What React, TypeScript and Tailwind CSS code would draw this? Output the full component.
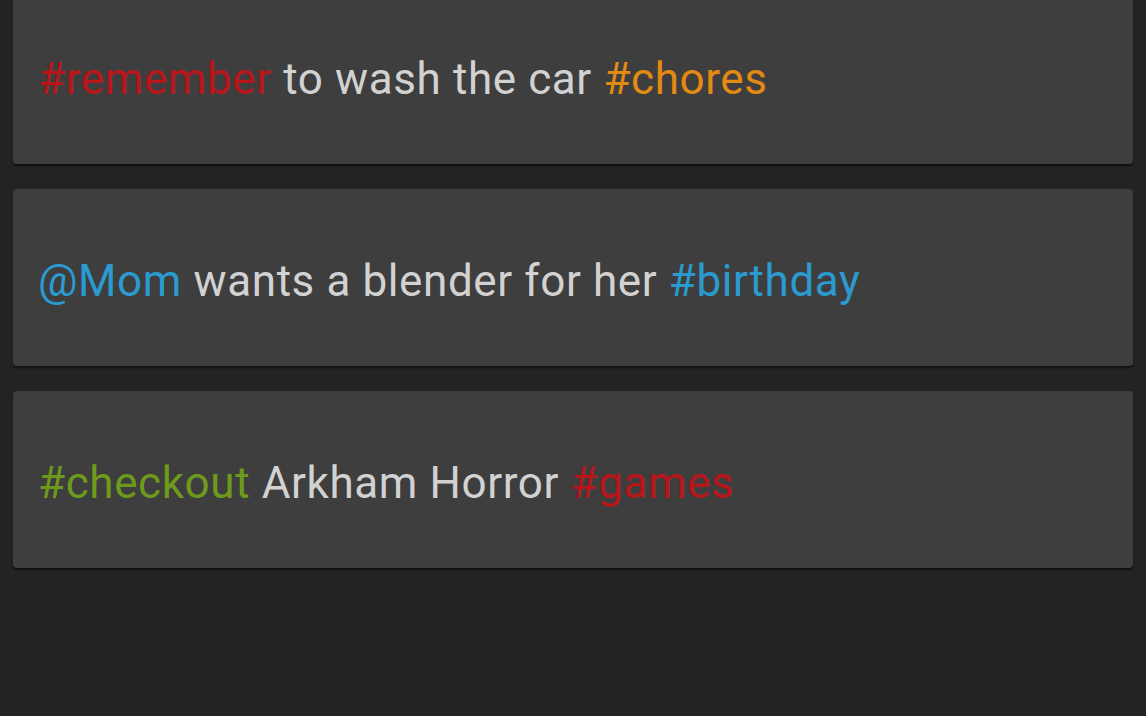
import React from "react";

type Part = { text: string; color?: string };

const notes: Part[][] = [
  [
    { text: "#remember", color: "text-[#b8161b]" },
    { text: " to wash the car " },
    { text: "#chores", color: "text-[#e38a12]" },
  ],
  [
    { text: "@Mom", color: "text-[#2b9ad0]" },
    { text: " wants a blender for her " },
    { text: "#birthday", color: "text-[#2b9ad0]" },
  ],
  [
    { text: "#checkout", color: "text-[#6e9a1c]" },
    { text: " Arkham Horror " },
    { text: "#games", color: "text-[#b8161b]" },
  ],
];

function NoteCard({ parts }: { parts: Part[] }) {
  return (
    <div className="h-[177px] flex items-center pl-[25px] pt-[6px] bg-[#3e3e3e] rounded-[4px] shadow-[0_2px_2px_rgba(0,0,0,0.55)]">
      <p className="text-[44px] leading-none tracking-[0.6px] text-[#d2d2d2] whitespace-pre">
        {parts.map((p, i) => (
          <span key={i} className={p.color}>
            {p.text}
          </span>
        ))}
      </p>
    </div>
  );
}

export default function App() {
  return (
    <div
      className="w-[1146px] h-[716px] overflow-hidden bg-[#232323] px-[13px]"
      style={{ fontFamily: "Roboto, 'Noto Sans', sans-serif" }}
    >
      <div className="flex flex-col gap-[25px] -mt-[13px]">
        {notes.map((n, i) => (
          <NoteCard key={i} parts={n} />
        ))}
      </div>
    </div>
  );
}
